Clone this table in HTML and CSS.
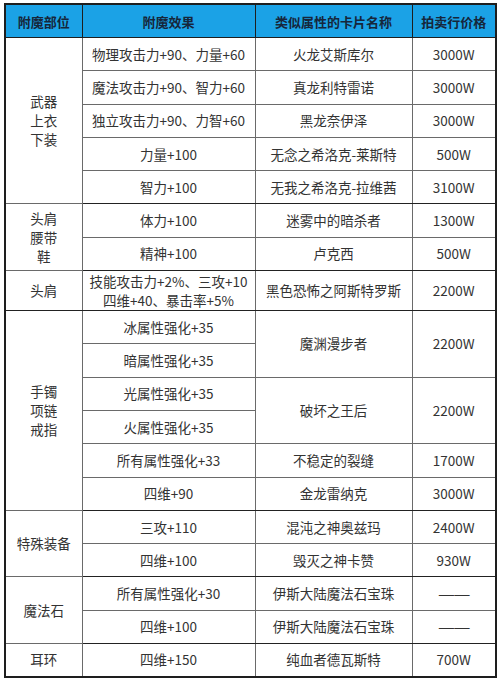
FILE: index.html
```html
<!DOCTYPE html>
<html lang="zh-CN">
<head>
<meta charset="utf-8">
<title>附魔表</title>
<link rel="stylesheet" href="styles.css">
</head>
<body>
<table class="enchant">
  <colgroup>
    <col class="c-part">
    <col class="c-effect">
    <col class="c-card">
    <col class="c-price">
  </colgroup>
  <thead>
    <tr class="head">
      <th>附魔部位</th>
      <th>附魔效果</th>
      <th>类似属性的卡片名称</th>
      <th>拍卖行价格</th>
    </tr>
  </thead>
  <tbody>
    <tr>
      <td class="part" rowspan="5">武器<br>上衣<br>下装</td>
      <td>物理攻击力+90、力量+60</td>
      <td>火龙艾斯库尔</td>
      <td>3000W</td>
    </tr>
    <tr>
      <td>魔法攻击力+90、智力+60</td>
      <td>真龙利特雷诺</td>
      <td>3000W</td>
    </tr>
    <tr>
      <td>独立攻击力+90、力智+60</td>
      <td>黑龙奈伊泽</td>
      <td>3000W</td>
    </tr>
    <tr>
      <td>力量+100</td>
      <td>无念之希洛克-莱斯特</td>
      <td>500W</td>
    </tr>
    <tr class="group-end">
      <td>智力+100</td>
      <td>无我之希洛克-拉维茜</td>
      <td>3100W</td>
    </tr>
    <tr>
      <td class="part" rowspan="2">头肩<br>腰带<br>鞋</td>
      <td>体力+100</td>
      <td>迷雾中的暗杀者</td>
      <td>1300W</td>
    </tr>
    <tr class="group-end">
      <td>精神+100</td>
      <td>卢克西</td>
      <td>500W</td>
    </tr>
    <tr class="tall group-end">
      <td class="part">头肩</td>
      <td>技能攻击力+2%、三攻+10<br>四维+40、暴击率+5%</td>
      <td>黑色恐怖之阿斯特罗斯</td>
      <td>2200W</td>
    </tr>
    <tr>
      <td class="part" rowspan="6">手镯<br>项链<br>戒指</td>
      <td>冰属性强化+35</td>
      <td rowspan="2" class="merged">魔渊漫步者</td>
      <td rowspan="2" class="merged">2200W</td>
    </tr>
    <tr>
      <td>暗属性强化+35</td>
    </tr>
    <tr>
      <td>光属性强化+35</td>
      <td rowspan="2">破坏之王后</td>
      <td rowspan="2">2200W</td>
    </tr>
    <tr>
      <td>火属性强化+35</td>
    </tr>
    <tr>
      <td>所有属性强化+33</td>
      <td>不稳定的裂缝</td>
      <td>1700W</td>
    </tr>
    <tr class="group-end">
      <td>四维+90</td>
      <td>金龙雷纳克</td>
      <td>3000W</td>
    </tr>
    <tr>
      <td class="part" rowspan="2">特殊装备</td>
      <td class="thick-bottom">三攻+110</td>
      <td class="thick-bottom">混沌之神奥兹玛</td>
      <td class="thick-bottom">2400W</td>
    </tr>
    <tr class="group-end">
      <td>四维+100</td>
      <td>毁灭之神卡赞</td>
      <td>930W</td>
    </tr>
    <tr>
      <td class="part" rowspan="2">魔法石</td>
      <td>所有属性强化+30</td>
      <td>伊斯大陆魔法石宝珠</td>
      <td><span class="dash">——</span></td>
    </tr>
    <tr class="group-end">
      <td>四维+100</td>
      <td>伊斯大陆魔法石宝珠</td>
      <td><span class="dash">——</span></td>
    </tr>
    <tr>
      <td class="part">耳环</td>
      <td>四维+150</td>
      <td>纯血者德瓦斯特</td>
      <td>700W</td>
    </tr>
  </tbody>
</table>
</body>
</html>
```

FILE: styles.css
```css
html, body {
  margin: 0;
  padding: 0;
  background: #ffffff;
}

body {
  padding: 3px 0 0 4px;
  font-family: "Noto Sans CJK SC", "Noto Sans", sans-serif;
}

.enchant {
  border-collapse: collapse;
  table-layout: fixed;
  width: 491px;
  border: 2px solid #1e1e1e;
  color: #333333;
  font-size: 13.5px;
}

.c-part { width: 77px; }
.c-effect { width: 173px; }
.c-card { width: 157px; }
.c-price { width: 84px; }

.enchant th,
.enchant td {
  border: 1px solid #6a6a6a;
  padding: 0;
  text-align: center;
  vertical-align: middle;
  line-height: 19px;
  white-space: nowrap;
}

.head th {
  background: #1ba2e6;
  color: #16263a;
  font-size: 13px;
  font-weight: bold;
  height: 32px;
  border-color: #1e1e1e;
  border-bottom: 1px solid #1e1e1e;
}

.enchant tbody tr {
  height: 33.3px;
}

.enchant tbody tr.tall {
  height: 40px;
}

.tall td {
  line-height: 19px;
}

.part {
  line-height: 20px;
  border-right-color: #333333;
}

.group-end td,
.part {
  border-bottom-color: #222222;
}

.thick-bottom {
  border-bottom-color: #555555;
}

.merged {
  border-bottom: 2px solid #6a6a6a;
}

.dash {
  display: inline-block;
  font-family: "DejaVu Sans", sans-serif;
  font-size: 13.5px;
  letter-spacing: -1px;
  transform: scaleX(1.25);
}
```
